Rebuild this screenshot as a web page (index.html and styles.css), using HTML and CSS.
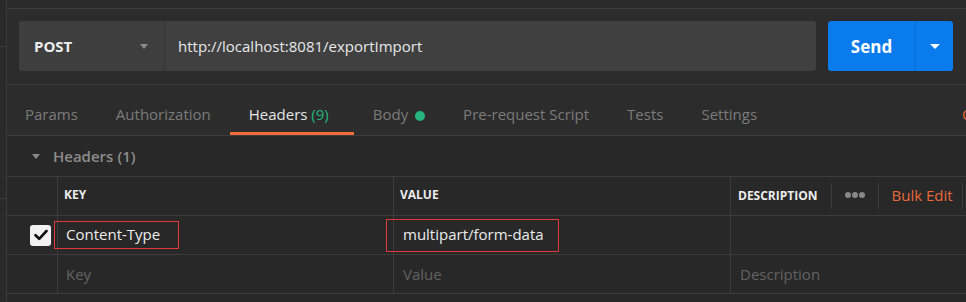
FILE: index.html
```html
<!DOCTYPE html>
<html lang="en">

<head>
    <meta charset="UTF-8">
    <meta name="viewport" content="width=device-width, initial-scale=1.0">
    <title>Request - Headers</title>
    <link rel="stylesheet" href="styles.css">
</head>

<body>
    <div class="app">
        <div class="sidebar">
            <div class="side-top"></div>
            <div class="side-mid"></div>
        </div>

        <div class="main">
            <div class="top-strip"></div>

            <div class="request">
                <div class="url-group">
                    <div class="method">POST <span class="caret"></span></div>
                    <div class="url">http://localhost:8081/exportImport</div>
                </div>
                <div class="send">
                    <span class="send-label">Send</span>
                    <span class="send-more"><span class="caret caret-white"></span></span>
                </div>
            </div>

            <div class="tabs">
                <div class="tab">Params</div>
                <div class="tab">Authorization</div>
                <div class="tab active">Headers <span class="count">(9)</span></div>
                <div class="tab">Body <span class="dot"></span></div>
                <div class="tab">Pre-request Script</div>
                <div class="tab">Tests</div>
                <div class="tab">Settings</div>
                <div class="tab-link">Cookies</div>
            </div>

            <div class="section">
                <div class="section-title"><span class="caret"></span>Headers <span class="muted-count">(1)</span></div>

                <div class="table">
                    <div class="row row-head">
                        <div class="cell cell-check"></div>
                        <div class="cell">KEY</div>
                        <div class="cell">VALUE</div>
                        <div class="cell cell-desc">
                            <span>DESCRIPTION</span>
                            <span class="sep"></span>
                            <span class="more"><i></i><i></i><i></i></span>
                            <span class="sep"></span>
                            <a class="bulk">Bulk Edit</a>
                            <span class="sep"></span>
                        </div>
                    </div>

                    <div class="row">
                        <div class="cell cell-check"><span class="checkbox">
                                <svg width="14" height="12" viewBox="0 0 14 12">
                                    <path d="M1.5 6.2 L5.2 9.8 L12.5 2" fill="none" stroke="#111" stroke-width="2.6" stroke-linecap="round" stroke-linejoin="round" />
                                </svg>
                            </span></div>
                        <div class="cell cell-key"><span class="mark mark-key">Content-Type</span></div>
                        <div class="cell cell-value"><span class="mark mark-value">multipart/form-data</span></div>
                        <div class="cell cell-input"></div>
                    </div>

                    <div class="row">
                        <div class="cell cell-check"></div>
                        <div class="cell cell-key placeholder">Key</div>
                        <div class="cell cell-value placeholder">Value</div>
                        <div class="cell cell-input placeholder">Description</div>
                    </div>
                </div>
            </div>
        </div>
    </div>
</body>

</html>
```

FILE: styles.css
```css
body {
    margin: 0;
    font-family: 'Open Sans', 'Liberation Sans', sans-serif;
    background-color: #2c2c2c;
    color: #e4e4e4;
    font-size: 15px;
}

.app {
    display: flex;
    width: 966px;
    height: 302px;
    overflow: hidden;
}

/* left edge of the sidebar */
.sidebar {
    width: 6px;
    flex-shrink: 0;
    border-right: 1px solid #3a3a3a;
    background-color: #2a2a2a;
}

.side-top {
    height: 46px;
    border-bottom: 1px solid #3a3a3a;
}

.side-mid {
    height: 151px;
    border-bottom: 1px solid #3a3a3a;
}

.main {
    flex: 1;
    min-width: 0;
    overflow: hidden;
}

.top-strip {
    height: 8px;
    background-color: #2a2a2a;
    border-bottom: 1px solid #3c3c3c;
}

/* request bar */
.request {
    display: flex;
    gap: 12px;
    padding: 12px 13px 13px 12px;
    border-bottom: 1px solid #3c3c3c;
}

.url-group {
    flex: 1;
    display: flex;
    height: 50px;
    border-radius: 3px;
    overflow: hidden;
    background-color: #404040;
}

.method {
    width: 130px;
    padding-left: 15px;
    display: flex;
    align-items: center;
    justify-content: space-between;
    font-weight: 700;
    color: #ececec;
    background-color: #3e3e3e;
    border-right: 1px solid #363636;
}

.method .caret {
    margin-right: 16px;
}

.caret {
    display: inline-block;
    width: 0;
    height: 0;
    border-left: 4px solid transparent;
    border-right: 4px solid transparent;
    border-top: 5px solid #8a8a8a;
}

.caret-white {
    border-top-color: #ffffff;
    border-left-width: 5px;
    border-right-width: 5px;
}

.url {
    display: flex;
    align-items: center;
    padding-left: 13px;
    color: #e8e8e8;
}

.send {
    display: flex;
    width: 125px;
    height: 50px;
    border-radius: 3px;
    background-color: #097bed;
    color: #ffffff;
}

.send-label {
    width: 87px;
    display: flex;
    align-items: center;
    justify-content: center;
    font-weight: 700;
    font-size: 17px;
    border-right: 1px solid #0a6dd2;
}

.send-more {
    flex: 1;
    display: flex;
    align-items: center;
    justify-content: center;
}

/* tabs */
.tabs {
    display: flex;
    height: 50px;
    border-bottom: 1px solid #3c3c3c;
}

.tab {
    padding: 19px 19px 0;
    line-height: 20px;
    color: #7b7b7b;
    white-space: nowrap;
    border-bottom: 3px solid transparent;
    box-sizing: border-box;
    height: 50px;
}

.tab:first-child {
    padding-left: 18px;
}

.tab.active {
    padding-right: 25px;
    color: #e6e6e6;
    border-bottom-color: #f26b3a;
}

.count {
    color: #26b47f;
}

.dot {
    display: inline-block;
    width: 10px;
    height: 10px;
    margin-left: 3px;
    border-radius: 50%;
    background-color: #26b47f;
    vertical-align: -1px;
}

.tab-link {
    margin-left: auto;
    width: 4px;
    min-width: 0;
    flex-shrink: 0;
    padding-top: 19px;
    line-height: 20px;
    color: #e8693a;
    white-space: nowrap;
}

/* headers table */
.section {
    background-color: #282828;
    height: 200px;
}

.section-title {
    height: 40px;
    display: flex;
    align-items: center;
    padding-left: 25px;
    font-weight: 600;
    color: #8c8c8c;
    border-bottom: 1px solid #3c3c3c;
}

.section-title .caret {
    margin-right: 13px;
}

.muted-count {
    margin-left: 4px;
}

.row {
    display: grid;
    grid-template-columns: 51px 336px 337px 1fr;
    height: 39px;
    box-sizing: border-box;
    border-bottom: 1px solid #3c3c3c;
}

.cell {
    display: flex;
    align-items: center;
    padding-left: 6px;
    border-right: 1px solid #3c3c3c;
    white-space: nowrap;
}

.cell:last-child {
    border-right: none;
}

.row-head .cell {
    padding-bottom: 3px;
    font-size: 12px;
    font-weight: 700;
    color: #ececec;
}

.cell-check {
    padding-left: 23px;
}

.row-head .cell-desc {
    padding-left: 7px;
    padding-bottom: 1px;
}

.sep {
    width: 1px;
    height: 26px;
    background-color: #3c3c3c;
    margin: 0 13px;
}

.sep:last-child {
    margin-left: 9px;
}

.more {
    display: flex;
    gap: 1px;
    padding-bottom: 2px;
}

.more i {
    width: 6px;
    height: 6px;
    border-radius: 50%;
    background-color: #888888;
}

.row-head .bulk {
    padding-bottom: 2px;
    font-size: 15px;
    font-weight: 400;
    color: #e8693a;
}

.checkbox {
    width: 21px;
    height: 21px;
    border-radius: 3px;
    background-color: #f2f2f2;
    display: flex;
    align-items: center;
    justify-content: center;
}

.cell-key {
    padding-left: 8px;
}

.cell-value,
.cell-input {
    padding-left: 9px;
}

.placeholder {
    color: #626262;
}

/* red marks drawn over the screenshot */
.mark {
    display: inline-flex;
    align-items: center;
    box-sizing: border-box;
    border: 1px solid #e0393a;
    padding-bottom: 2px;
    color: #ececec;
}

.mark-key {
    margin-left: -12px;
    padding-left: 11px;
    width: 125px;
    height: 28px;
}

.mark-value {
    margin-left: -17px;
    padding-left: 16px;
    width: 173px;
    height: 33px;
}
```
